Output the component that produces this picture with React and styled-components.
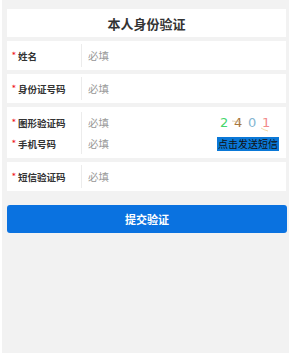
import React from 'react';
import styled, { createGlobalStyle } from 'styled-components';

const GlobalStyle = createGlobalStyle`
  html, body {
    margin: 0;
    padding: 0;
    background: #fff;
  }
  body {
    font-family: "Noto Sans CJK SC", "Noto Sans", sans-serif;
  }
  * {
    box-sizing: border-box;
  }
`;

const Page = styled.div`
  width: 287px;
  height: 353px;
  margin-left: 2px;
  padding: 9px 3px 0 5px;
  background: #f2f2f2;
  display: flex;
  flex-direction: column;
  gap: 4px;
`;

const TitleCard = styled.div`
  height: 28px;
  background: #fff;
  display: flex;
  align-items: center;
  justify-content: center;
  font-size: 13px;
  font-weight: 700;
  color: #333;
`;

const Card = styled.div`
  width: 279px;
  background: #fff;
  display: flex;
  padding: ${({ $double }) => ($double ? '5px 0 4px' : '3px 0')};
  height: ${({ $double }) => ($double ? '51px' : '29px')};
`;

const LabelCol = styled.div`
  width: 74px;
  flex-shrink: 0;
  display: flex;
  flex-direction: column;
  justify-content: center;
  padding-left: 5px;
`;

const Label = styled.div`
  height: 21px;
  display: flex;
  align-items: center;
  font-size: 9.5px;
  font-weight: 700;
  color: #333;
  white-space: nowrap;

  &::before {
    content: '*';
    color: #f0141e;
    font-family: "DejaVu Sans", sans-serif;
    font-size: 7px;
    width: 6px;
    margin-top: -2px;
  }
`;

const InputCol = styled.div`
  flex: 1;
  display: flex;
  flex-direction: column;
  justify-content: center;
  border-left: 1px solid #ececec;
  padding-left: 6px;
`;

const Line = styled.div`
  height: 21px;
  display: flex;
  align-items: center;
  justify-content: space-between;
  padding-right: ${({ $pad }) => $pad || 0}px;
`;

const Field = styled.input`
  border: none;
  outline: none;
  background: transparent;
  padding: 0;
  width: 100px;
  font-family: inherit;
  font-size: 10.5px;
  color: #333;

  &::placeholder {
    color: #999;
  }
`;

const Captcha = styled.div`
  position: relative;
  display: flex;
  gap: 6px;
  font-family: "DejaVu Sans", sans-serif;
  font-size: 13px;
  line-height: 1;
`;

const Digit = styled.span`
  color: ${({ $color }) => $color};
  width: 8px;
  text-align: center;
`;

const Noise = styled.svg`
  position: absolute;
  left: 0;
  top: 0;
  pointer-events: none;
`;

const SendSms = styled.span`
  background: #0a78d7;
  color: #111;
  font-size: 10px;
  line-height: 14px;
  padding: 0 1px;
  white-space: nowrap;
`;

const SubmitButton = styled.button`
  margin-top: 10px;
  width: 280px;
  height: 28px;
  border: none;
  border-radius: 3px;
  background: #0a72e0;
  color: #fff;
  font-family: inherit;
  font-size: 11px;
  font-weight: 700;
  cursor: pointer;
`;

const digits = [
  { d: '2', color: '#45d66b' },
  { d: '4', color: '#a8773e' },
  { d: '0', color: '#84b6d2' },
  { d: '1', color: '#f28a8a' },
];

const App = () => (
  <>
    <GlobalStyle />
    <Page>
      <TitleCard>本人身份验证</TitleCard>

      <Card>
        <LabelCol>
          <Label>姓名</Label>
        </LabelCol>
        <InputCol>
          <Field placeholder="必填" />
        </InputCol>
      </Card>

      <Card>
        <LabelCol>
          <Label>身份证号码</Label>
        </LabelCol>
        <InputCol>
          <Field placeholder="必填" />
        </InputCol>
      </Card>

      <Card $double>
        <LabelCol>
          <Label>图形验证码</Label>
          <Label>手机号码</Label>
        </LabelCol>
        <InputCol>
          <Line $pad={16}>
            <Field placeholder="必填" />
            <Captcha>
              {digits.map(({ d, color }) => (
                <Digit key={d} $color={color}>
                  {d}
                </Digit>
              ))}
              <Noise width="54" height="16" viewBox="0 0 54 16">
                <path d="M12 5 L21 6" stroke="#c9b08a" strokeWidth="0.6" fill="none" />
                <path d="M41 12 Q44 14 48 15" stroke="#e8c070" strokeWidth="0.6" fill="none" />
              </Noise>
            </Captcha>
          </Line>
          <Line $pad={7}>
            <Field placeholder="必填" />
            <SendSms>点击发送短信</SendSms>
          </Line>
        </InputCol>
      </Card>

      <Card>
        <LabelCol>
          <Label>短信验证码</Label>
        </LabelCol>
        <InputCol>
          <Field placeholder="必填" />
        </InputCol>
      </Card>

      <SubmitButton>提交验证</SubmitButton>
    </Page>
  </>
);

export default App;
